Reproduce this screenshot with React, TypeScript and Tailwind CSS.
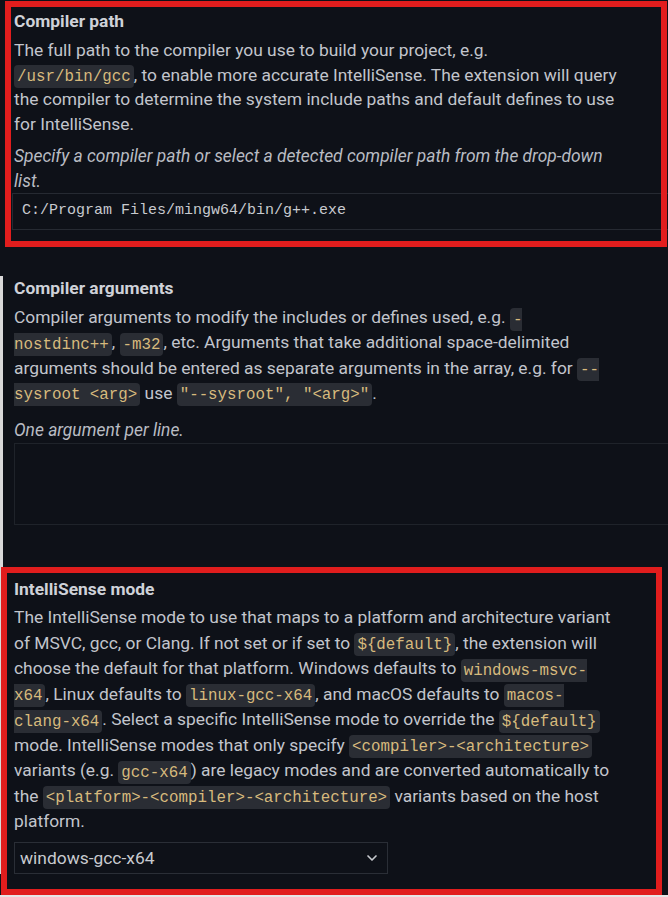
import React from "react";
import { ChevronDown } from "lucide-react";

const C = ({ children }: { children: React.ReactNode }) => (
  <code className="font-['Liberation_Mono',monospace] text-[15.8px] leading-[16px] text-[#d7ba7d] bg-[#2a2d34] rounded-[4px] px-[3px] py-[2.5px]">
    {children}
  </code>
);

export default function App() {
  return (
    <div className="relative w-[668px] h-[897px] overflow-hidden bg-[#0e1118] font-['Roboto',sans-serif] text-[#c2c5cc]">
      {/* Section 1 */}
      <section className="pt-[9px] pl-[14px] pr-[50px]">
        <h2 className="text-[17.4px] leading-[24px] font-bold text-[#cfd2d8]">Compiler path</h2>
        <p className="mt-[5px] text-[17.4px] leading-[24.5px]">
          The full path to the compiler you use to build your project, e.g.
          <br />
          <C>/usr/bin/gcc</C>, to enable more accurate IntelliSense. The extension will query the compiler to
          determine the system include paths and default defines to use for IntelliSense.
        </p>
        <p className="mt-[8px] text-[17.4px] leading-[24.5px] italic text-[#b9bcc3]">
          Specify a compiler path or select a detected compiler path from the drop-down list.
        </p>
      </section>
      <div className="ml-[12px] h-[37px] w-[700px] border border-[#262a32] flex items-center pl-[9px] font-['Liberation_Mono',monospace] text-[15px] text-[#c8cacf]">
        C:/Program Files/mingw64/bin/g++.exe
      </div>

      {/* Section 2 */}
      <section className="mt-[46px] pl-[14px] pr-[50px] shadow-[inset_3px_0_0_#d9d9d9]">
        <h2 className="text-[17.4px] leading-[24px] font-bold text-[#cfd2d8]">Compiler arguments</h2>
        <p className="mt-[5px] text-[17.4px] leading-[25.3px]">
          Compiler arguments to modify the includes or defines used, e.g. <C>-nostdinc++</C>, <C>-m32</C>, etc.
          Arguments that take additional space-delimited arguments should be entered as separate arguments in the
          array, e.g. for <C>--sysroot &lt;arg&gt;</C> use <C>"--sysroot", "&lt;arg&gt;"</C>.
        </p>
        <p className="mt-[12px] text-[17.4px] leading-[25.3px] italic text-[#b9bcc3]">One argument per line.</p>
        <div className="h-[82px] w-[700px] border border-[#1f232a]" />
      </section>

      {/* Section 3 */}
      <section className="pt-[52px] pl-[14px] pr-[50px] shadow-[inset_3px_0_0_#d9d9d9]">
        <h2 className="text-[17.4px] leading-[24px] font-bold text-[#cfd2d8]">IntelliSense mode</h2>
        <p className="mt-[4px] text-[17.4px] leading-[25.5px]">
          The IntelliSense mode to use that maps to a platform and architecture variant of MSVC, gcc, or Clang. If
          not set or if set to <C>${"{default}"}</C>, the extension will choose the default for that platform.
          Windows defaults to <C>windows-msvc-x64</C>, Linux defaults to <C>linux-gcc-x64</C>, and macOS defaults to{" "}
          <C>macos-clang-x64</C>. Select a specific IntelliSense mode to override the <C>${"{default}"}</C> mode.
          IntelliSense modes that only specify <C>&lt;compiler&gt;-&lt;architecture&gt;</C> variants (e.g.{" "}
          <C>gcc-x64</C>) are legacy modes and are converted automatically to the{" "}
          <C>&lt;platform&gt;-&lt;compiler&gt;-&lt;architecture&gt;</C> variants based on the host platform.
        </p>
        <div className="mt-[7px] h-[32px] w-[374px] border border-[#2a2e36] flex items-center justify-between pl-[5px] pr-[7px] text-[17.4px] text-[#c8cacf]">
          <span>windows-gcc-x64</span>
          <ChevronDown size={16} strokeWidth={2.5} className="text-[#c8cacf]" />
        </div>
      </section>

      {/* bottom light strip */}
      <div className="absolute left-0 right-0 bottom-0 h-[2px] bg-[#e6e6e6]" />

      {/* Annotation boxes */}
      <div className="absolute left-[5px] top-[1px] w-[662px] h-[246px] border-[6px] border-[#e11d1d] pointer-events-none" />
      <div className="absolute left-[1px] top-[567px] w-[661px] h-[328px] border-[6px] border-[#e11d1d] pointer-events-none" />
    </div>
  );
}
